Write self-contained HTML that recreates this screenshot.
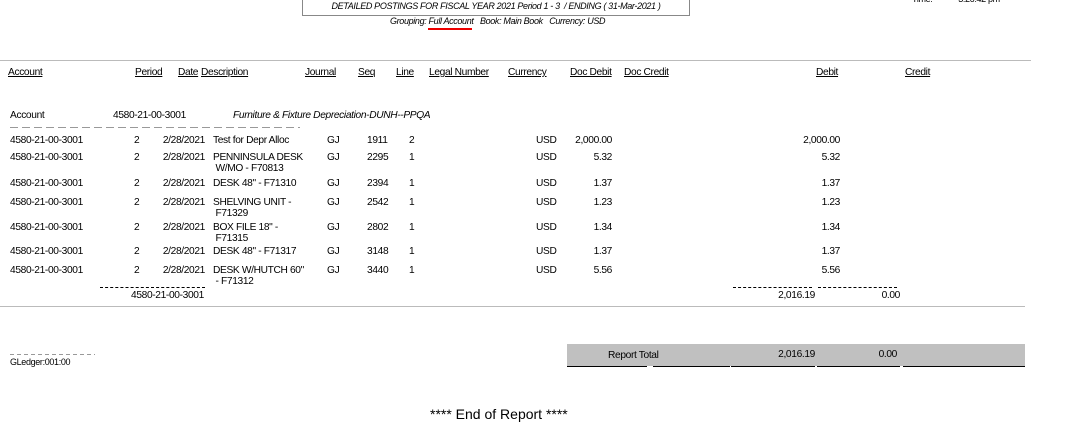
<!DOCTYPE html>
<html><head><meta charset="utf-8"><style>
html,body{margin:0;padding:0;background:#fff;}
body{width:1066px;height:425px;position:relative;overflow:hidden;font-family:"Liberation Sans",Arial,sans-serif;font-size:10.2px;color:#000;letter-spacing:-0.35px;}
.a{position:absolute;white-space:nowrap;line-height:11px;}
.r{text-align:right;}
.u{text-decoration:underline;}
.i{font-style:italic;}
.hl{position:absolute;height:0;border-top:1px solid #bbb;}
.dl{position:absolute;height:0;border-top:1px dashed #000;}
</style></head><body>
<div style="position:absolute;left:302px;top:-6px;width:386px;height:20px;border:1px solid #888;"></div>
<div class="a i" style="left:302px;width:388px;top:1px;text-align:center;font-size:9px;">DETAILED POSTINGS FOR FISCAL YEAR 2021 Period 1 - 3 &nbsp;/ ENDING ( 31-Mar-2021 )</div>
<div class="a i" style="left:390px;top:16px;font-size:9px;">Grouping: Full Account &nbsp;&nbsp;Book: Main Book &nbsp;&nbsp;Currency: USD</div>
<div style="position:absolute;left:428px;top:28px;width:44px;height:2px;background:#e00;"></div>
<div class="a" style="left:912px;top:-6px;font-size:9px;">Time: &nbsp;&nbsp;&nbsp;&nbsp;&nbsp;&nbsp;&nbsp;&nbsp;&nbsp;&nbsp;&nbsp;3:26:42 pm</div>

<div class="hl" style="left:0;top:60px;width:1031px;"></div>
<div class="a u" style="left:8px;top:67px;">Account</div>
<div class="a u" style="left:135px;top:67px;">Period</div>
<div class="a u" style="left:178px;top:67px;">Date</div>
<div class="a u" style="left:201px;top:67px;">Description</div>
<div class="a u" style="left:305px;top:67px;">Journal</div>
<div class="a u" style="left:358px;top:67px;">Seq</div>
<div class="a u" style="left:396px;top:67px;">Line</div>
<div class="a u" style="left:429px;top:67px;">Legal Number</div>
<div class="a u" style="left:508px;top:67px;">Currency</div>
<div class="a u" style="left:570px;top:67px;">Doc Debit</div>
<div class="a u" style="left:624px;top:67px;">Doc Credit</div>
<div class="a u" style="left:816px;top:67px;">Debit</div>
<div class="a u" style="left:905px;top:67px;">Credit</div>

<div class="a" style="left:10px;top:110px;">Account</div>
<div class="a" style="left:113px;top:110px;">4580-21-00-3001</div>
<div class="a i" style="left:233px;top:110px;">Furniture &amp; Fixture Depreciation-DUNH--PPQA</div>
<div style="position:absolute;left:10px;top:127px;width:290px;height:1px;background:repeating-linear-gradient(90deg,#999 0 8px,transparent 8px 12px);"></div>

<div class="a" style="left:10px;top:135px;">4580-21-00-3001</div><div class="a" style="left:134px;top:135px;">2</div><div class="a r" style="left:150px;width:55px;top:135px;">2/28/2021</div><div class="a" style="left:213px;top:135px;">Test for Depr Alloc</div><div class="a" style="left:327px;top:135px;">GJ</div><div class="a" style="left:367px;top:135px;">1911</div><div class="a" style="left:409px;top:135px;">2</div><div class="a" style="left:536px;top:135px;">USD</div><div class="a r" style="left:550px;width:62px;top:135px;">2,000.00</div><div class="a r" style="left:770px;width:70px;top:135px;">2,000.00</div>

<div class="a" style="left:10px;top:152px;">4580-21-00-3001</div><div class="a" style="left:134px;top:152px;">2</div><div class="a r" style="left:150px;width:55px;top:152px;">2/28/2021</div><div class="a" style="left:213px;top:152px;">PENNINSULA DESK<br>&nbsp;W/MO - F70813</div><div class="a" style="left:327px;top:152px;">GJ</div><div class="a" style="left:367px;top:152px;">2295</div><div class="a" style="left:409px;top:152px;">1</div><div class="a" style="left:536px;top:152px;">USD</div><div class="a r" style="left:550px;width:62px;top:152px;">5.32</div><div class="a r" style="left:770px;width:70px;top:152px;">5.32</div>

<div class="a" style="left:10px;top:178px;">4580-21-00-3001</div><div class="a" style="left:134px;top:178px;">2</div><div class="a r" style="left:150px;width:55px;top:178px;">2/28/2021</div><div class="a" style="left:213px;top:178px;">DESK 48" - F71310</div><div class="a" style="left:327px;top:178px;">GJ</div><div class="a" style="left:367px;top:178px;">2394</div><div class="a" style="left:409px;top:178px;">1</div><div class="a" style="left:536px;top:178px;">USD</div><div class="a r" style="left:550px;width:62px;top:178px;">1.37</div><div class="a r" style="left:770px;width:70px;top:178px;">1.37</div>

<div class="a" style="left:10px;top:197px;">4580-21-00-3001</div><div class="a" style="left:134px;top:197px;">2</div><div class="a r" style="left:150px;width:55px;top:197px;">2/28/2021</div><div class="a" style="left:213px;top:197px;">SHELVING UNIT -<br>&nbsp;F71329</div><div class="a" style="left:327px;top:197px;">GJ</div><div class="a" style="left:367px;top:197px;">2542</div><div class="a" style="left:409px;top:197px;">1</div><div class="a" style="left:536px;top:197px;">USD</div><div class="a r" style="left:550px;width:62px;top:197px;">1.23</div><div class="a r" style="left:770px;width:70px;top:197px;">1.23</div>

<div class="a" style="left:10px;top:222px;">4580-21-00-3001</div><div class="a" style="left:134px;top:222px;">2</div><div class="a r" style="left:150px;width:55px;top:222px;">2/28/2021</div><div class="a" style="left:213px;top:222px;">BOX FILE 18" -<br>&nbsp;F71315</div><div class="a" style="left:327px;top:222px;">GJ</div><div class="a" style="left:367px;top:222px;">2802</div><div class="a" style="left:409px;top:222px;">1</div><div class="a" style="left:536px;top:222px;">USD</div><div class="a r" style="left:550px;width:62px;top:222px;">1.34</div><div class="a r" style="left:770px;width:70px;top:222px;">1.34</div>

<div class="a" style="left:10px;top:246px;">4580-21-00-3001</div><div class="a" style="left:134px;top:246px;">2</div><div class="a r" style="left:150px;width:55px;top:246px;">2/28/2021</div><div class="a" style="left:213px;top:246px;">DESK 48" - F71317</div><div class="a" style="left:327px;top:246px;">GJ</div><div class="a" style="left:367px;top:246px;">3148</div><div class="a" style="left:409px;top:246px;">1</div><div class="a" style="left:536px;top:246px;">USD</div><div class="a r" style="left:550px;width:62px;top:246px;">1.37</div><div class="a r" style="left:770px;width:70px;top:246px;">1.37</div>

<div class="a" style="left:10px;top:265px;">4580-21-00-3001</div><div class="a" style="left:134px;top:265px;">2</div><div class="a r" style="left:150px;width:55px;top:265px;">2/28/2021</div><div class="a" style="left:213px;top:265px;">DESK W/HUTCH 60"<br>&nbsp;- F71312</div><div class="a" style="left:327px;top:265px;">GJ</div><div class="a" style="left:367px;top:265px;">3440</div><div class="a" style="left:409px;top:265px;">1</div><div class="a" style="left:536px;top:265px;">USD</div><div class="a r" style="left:550px;width:62px;top:265px;">5.56</div><div class="a r" style="left:770px;width:70px;top:265px;">5.56</div>

<div class="dl" style="left:100px;top:287px;width:105px;"></div>
<div class="a" style="left:131px;top:290px;">4580-21-00-3001</div>
<div class="dl" style="left:733px;top:287px;width:79px;"></div>
<div class="dl" style="left:818px;top:287px;width:79px;"></div>
<div class="a r" style="left:745px;width:70px;top:290px;">2,016.19</div>
<div class="a r" style="left:850px;width:50px;top:290px;">0.00</div>
<div class="hl" style="left:0;top:306px;width:1025px;"></div>

<div style="position:absolute;left:10px;top:354px;width:85px;height:1px;background:repeating-linear-gradient(90deg,#999 0 4px,transparent 4px 7px);"></div>
<div class="a" style="left:10px;top:357px;font-size:9px;">GLedger:001:00</div>

<div style="position:absolute;left:567px;top:344px;width:458px;height:22px;background:#c0c0c0;"></div>
<div class="a" style="left:608px;top:350px;">Report Total</div>
<div class="a r" style="left:745px;width:70px;top:349px;">2,016.19</div>
<div class="a r" style="left:850px;width:47px;top:349px;">0.00</div>
<div style="position:absolute;top:366px;left:567px;width:80px;height:1px;background:#000;"></div>
<div style="position:absolute;top:366px;left:653px;width:77px;height:1px;background:#000;"></div>
<div style="position:absolute;top:366px;left:731px;width:84px;height:1px;background:#000;"></div>
<div style="position:absolute;top:366px;left:817px;width:83px;height:1px;background:#000;"></div>
<div style="position:absolute;top:366px;left:903px;width:122px;height:1px;background:#000;"></div>

<div class="a" style="left:430px;top:406px;font-size:14px;line-height:16px;letter-spacing:0;">**** End of Report ****</div>
</body></html>
